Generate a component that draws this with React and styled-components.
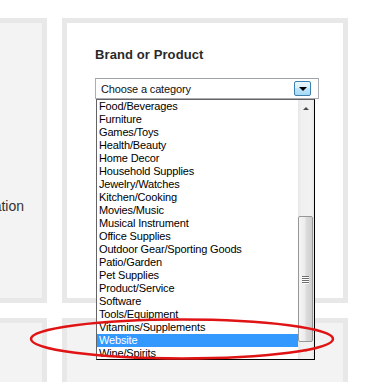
import styled, { createGlobalStyle } from 'styled-components';

const GlobalStyle = createGlobalStyle`
  html, body {
    margin: 0;
    padding: 0;
    background: #fff;
    overflow: hidden;
  }
  body {
    font-family: "Liberation Sans", Arial, sans-serif;
  }
`;

const Page = styled.div`
  position: relative;
  width: 382px;
  height: 382px;
  overflow: hidden;
  padding-top: 18px;
  box-sizing: border-box;
`;

const Grid = styled.div`
  display: grid;
  grid-template-columns: 200px 286px;
  grid-template-rows: 285px 120px;
  gap: 15px;
  margin-left: -153px;
`;

const Panel = styled.div`
  box-sizing: border-box;
  border: 5px solid #e8e8e8;
  background: ${p => (p.$white ? '#fff' : '#f3f3f3')};
`;

const SideLabel = styled.div`
  padding: 175px 18px 0 0;
  text-align: right;
  font-size: 14px;
  line-height: 16px;
  color: #333;
`;

const Content = styled.div`
  padding: 24px 24px 0 28px;
`;

const Title = styled.h3`
  margin: 0 0 15px;
  font-size: 13px;
  line-height: 16px;
  font-weight: bold;
  color: #2a2a2a;
  letter-spacing: 0.1px;
`;

const SelectWrap = styled.div`
  position: relative;
  z-index: 5;
  width: 224px;
`;

const Select = styled.div`
  box-sizing: border-box;
  height: 21px;
  display: flex;
  align-items: center;
  justify-content: space-between;
  padding: 0 7px 0 5px;
  border: 1px solid #abadb3;
  border-top-color: #9ea3ab;
  background: #fff;
  font-size: 11px;
  letter-spacing: -0.15px;
  color: #111;
`;

const DropButton = styled.div`
  box-sizing: border-box;
  width: 17px;
  height: 15px;
  border: 1px solid #3c7fb1;
  border-radius: 2px;
  background: linear-gradient(#eaf6fd, #d9f0fc 45%, #bee6fd 50%, #a7d9f5);
  display: flex;
  align-items: center;
  justify-content: center;
  padding-top: 1px;

  &::after {
    content: '';
    border-left: 4px solid transparent;
    border-right: 4px solid transparent;
    border-top: 4px solid #000;
  }
`;

const ListBox = styled.div`
  position: absolute;
  top: 100%;
  left: 1px;
  width: 219px;
  height: 261px;
  box-sizing: border-box;
  border: 1px solid #000;
  border-left-color: #646464;
  border-top-color: #646464;
  background: #fff;
  display: flex;
`;

const Items = styled.ul`
  list-style: none;
  margin: 0;
  padding: 0;
  flex: 1;
  overflow: hidden;
`;

const Item = styled.li`
  height: 13px;
  line-height: 13px;
  padding-left: 2px;
  font-size: 11px;
  letter-spacing: -0.15px;
  white-space: nowrap;
  color: ${p => (p.$active ? '#fff' : '#000')};
  background: ${p => (p.$active ? '#3399ff' : 'transparent')};
`;

const Scrollbar = styled.div`
  width: 16px;
  display: flex;
  flex-direction: column;
  background: linear-gradient(to right, #e6e6e6, #f0f0f0 20%, #f2f2f2 80%, #e8e8e8);
`;

const Arrow = styled.div`
  height: 17px;
  display: flex;
  align-items: center;
  justify-content: center;

  &::after {
    content: '';
    border-left: 3px solid transparent;
    border-right: 3px solid transparent;
    ${p =>
      p.$down
        ? 'border-top: 3px solid #9a9a9a;'
        : 'border-bottom: 3px solid #4a4a4a;'}
  }
`;

const Track = styled.div`
  flex: 1;
  display: flex;
  flex-direction: column;
`;

const Thumb = styled.div`
  box-sizing: border-box;
  width: 15px;
  height: 126px;
  border: 1px solid #979797;
  border-radius: 2px;
  background: linear-gradient(to right, #f5f5f5, #ececec 45%, #dcdcdc 55%, #cfcfcf);
  display: flex;
  flex-direction: column;
  align-items: center;
  justify-content: center;
  gap: 1px;
`;

const Grip = styled.span`
  width: 7px;
  height: 1px;
  background: #6f6f6f;
  box-shadow: 0 1px 0 #fff;
`;

const Annotation = styled.svg`
  position: absolute;
  z-index: 10;
  left: 28px;
  top: 316px;
  pointer-events: none;
`;

const categories = [
  'Food/Beverages',
  'Furniture',
  'Games/Toys',
  'Health/Beauty',
  'Home Decor',
  'Household Supplies',
  'Jewelry/Watches',
  'Kitchen/Cooking',
  'Movies/Music',
  'Musical Instrument',
  'Office Supplies',
  'Outdoor Gear/Sporting Goods',
  'Patio/Garden',
  'Pet Supplies',
  'Product/Service',
  'Software',
  'Tools/Equipment',
  'Vitamins/Supplements',
  'Website',
  'Wine/Spirits',
];

const App = () => {
  const selected = 'Website';
  const thumbOffset = 99;
  return (
    <Page>
      <GlobalStyle />
      <Grid>
        <Panel>
          <SideLabel>Location</SideLabel>
        </Panel>
        <Panel $white>
          <Content>
            <Title>Brand or Product</Title>
            <SelectWrap>
              <Select>
                <span>Choose a category</span>
                <DropButton />
              </Select>
              <ListBox>
                <Items>
                  {categories.map(c => (
                    <Item key={c} $active={c === selected}>
                      {c}
                    </Item>
                  ))}
                </Items>
                <Scrollbar>
                  <Arrow />
                  <Track>
                    <Thumb style={{ marginTop: thumbOffset }}>
                      <Grip />
                      <Grip />
                      <Grip />
                      <Grip />
                    </Thumb>
                  </Track>
                  <Arrow $down />
                </Scrollbar>
              </ListBox>
            </SelectWrap>
          </Content>
        </Panel>
        <Panel />
        <Panel />
      </Grid>
      <Annotation width="312" height="48" viewBox="0 0 312 48">
        <ellipse cx="154" cy="23" rx="151" ry="19.5" fill="none" stroke="#e01414" strokeWidth="2.5" />
      </Annotation>
    </Page>
  );
};

export default App;
